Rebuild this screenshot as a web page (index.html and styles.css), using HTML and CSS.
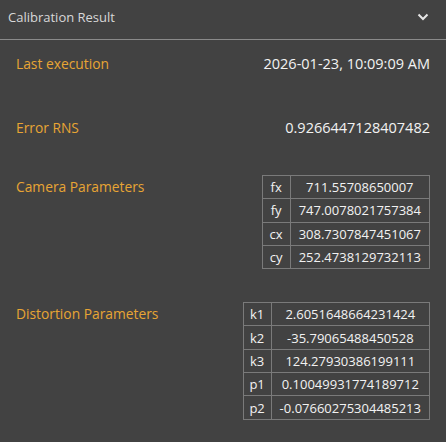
FILE: index.html
```html
<!DOCTYPE html>
<html>
<head>
<meta charset="utf-8">
<link rel="stylesheet" href="styles.css">
</head>
<body>
<div class="panel">
  <div class="header">
    <span class="title">Calibration Result</span>
    <svg class="chev" width="12" height="8" viewBox="0 0 12 8"><path d="M1.5 1.5 L6 6 L10.5 1.5" fill="none" stroke="#e6e6e6" stroke-width="2"/></svg>
  </div>
  <div class="content">
    <div class="row r1">
      <div class="label">Last execution</div>
      <div class="value">2026-01-23, 10:09:09 AM</div>
    </div>
    <div class="row r2">
      <div class="label">Error RNS</div>
      <div class="value">0.9266447128407482</div>
    </div>
    <div class="row r3">
      <div class="label tl">Camera Parameters</div>
      <table class="params">
        <tr><td class="k">fx</td><td class="v">711.55708650007</td></tr>
        <tr><td class="k">fy</td><td class="v">747.0078021757384</td></tr>
        <tr><td class="k">cx</td><td class="v">308.7307847451067</td></tr>
        <tr><td class="k">cy</td><td class="v">252.4738129732113</td></tr>
      </table>
    </div>
    <div class="row r4">
      <div class="label tl">Distortion Parameters</div>
      <table class="params">
        <tr><td class="k">k1</td><td class="v">2.6051648664231424</td></tr>
        <tr><td class="k">k2</td><td class="v">-35.79065488450528</td></tr>
        <tr><td class="k">k3</td><td class="v">124.27930386199111</td></tr>
        <tr><td class="k">p1</td><td class="v">0.10049931774189712</td></tr>
        <tr><td class="k">p2</td><td class="v">-0.07660275304485213</td></tr>
      </table>
    </div>
  </div>
</div>
</body>
</html>
```
FILE: styles.css
```css
html, body {
  margin: 0;
  padding: 0;
  background: #424242;
}
.panel {
  width: 446px;
  height: 442px;
  background: #424242;
  font-family: "Open Sans", "DejaVu Sans", sans-serif;
}
.header {
  display: flex;
  align-items: center;
  justify-content: space-between;
  padding: 0 17px 0 8px;
  box-sizing: border-box;
  height: 40px;
  border-bottom: 1px solid #8a8a8a;
}
.title {
  color: #d8d8d8;
  font-size: 13px;
  margin-top: -5px;
}
.chev {
  margin-top: -5px;
}
.content {
  padding: 0 16px;
}
.row {
  display: flex;
  justify-content: space-between;
  align-items: flex-start;
}
.label {
  color: #e8a534;
  font-size: 13.8px;
  line-height: 18px;
}
.value {
  color: #f2f2f2;
  font-size: 14.5px;
  line-height: 18px;
}
.r1 { padding-top: 15px; }
.r2 { padding-top: 46px; }
.r3 { padding-top: 38px; }
.r4 { padding-top: 33px; }
.tl { padding-top: 3px; }
.params {
  border-collapse: collapse;
  color: #f2f2f2;
  font-size: 13px;
}
.params td {
  border: 1px solid #7a7a7a;
  height: 23.3px;
  padding: 0 8px;
  text-align: center;
  box-sizing: border-box;
  line-height: 16px;
  white-space: nowrap;
}
.params td.k {
  width: 28px;
  min-width: 28px;
  padding: 0;
}
```
